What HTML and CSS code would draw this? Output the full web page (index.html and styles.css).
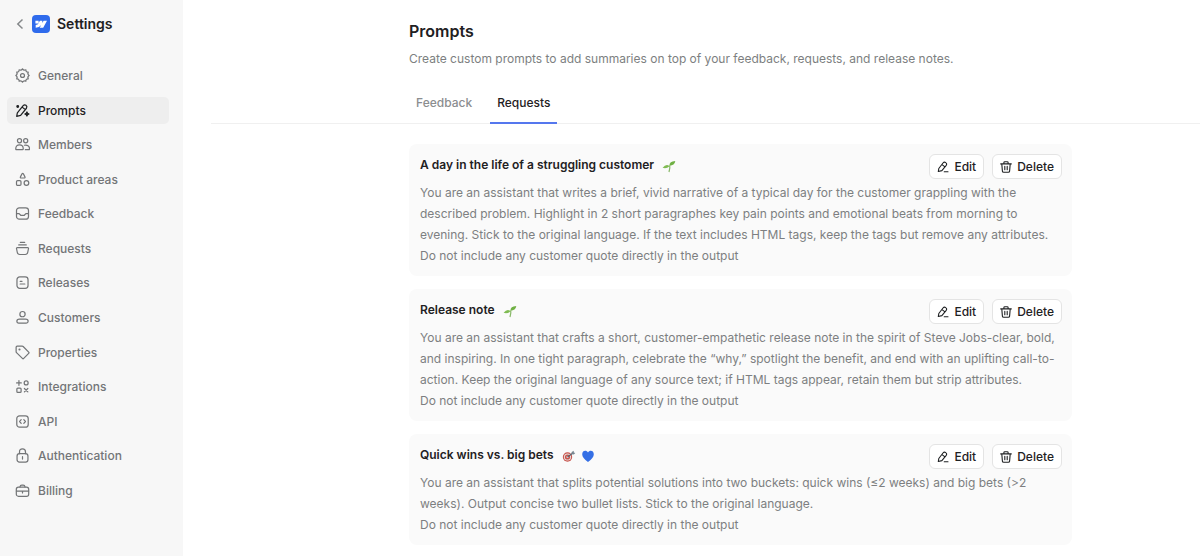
FILE: index.html
```html
<!DOCTYPE html>
<html lang="en">
<head>
    <meta charset="UTF-8">
    <meta name="viewport" content="width=device-width, initial-scale=1.0">
    <title>Settings - Prompts</title>
    <link rel="stylesheet" href="styles.css">
</head>
<body>

<!-- Shared icons -->
<svg class="sprite" aria-hidden="true">
    <symbol id="icon-edit" viewBox="0 0 12 12">
        <path d="M1.300 10.500l.5-3L6 2q1.300-1.500 2.700-.4 1.600 1.200.5 2.700L4.900 9.600zM5 3.600l3 2.300M7.200 10.800h3.800"/>
    </symbol>
    <symbol id="icon-trash" viewBox="0 0 12 12">
        <path d="M.7 2.900h10.600M3.900 2.800V1.600q0-.9.900-.9h2.400q.9 0 .9.900v1.200M1.800 3l.6 7.100q.1 1.200 1.300 1.200h4.600q1.200 0 1.300-1.200L10.200 3M4.800 5.400v3.400M7.200 5.400v3.400"/>
    </symbol>
    <symbol id="emoji-seedling" viewBox="0 0 14 14">
        <path d="M7 13Q8.300 9 7.700 6.300" fill="none" stroke="#86b765" stroke-width="1.200"/>
        <path d="M7.500 6.800Q7.200 2.300 13.300 2 12.600 6.400 7.500 6.800z" fill="#6fb043"/>
        <path d="M7.500 7.200Q4.300 4.300.6 8.800 4.600 10 7.500 7.200z" fill="#7fbb52"/>
    </symbol>
</svg>

<div class="layout">
    <aside class="sidebar">
        <header class="sidebar-header">
            <a href="#" class="back" aria-label="Back">
                <svg width="8" height="12" viewBox="0 0 8 12"><path d="M6.500 1.500L1.800 6l4.700 4.500"/></svg>
            </a>
            <svg class="logo" width="18" height="18" viewBox="0 0 18 18" aria-hidden="true">
                <rect width="18" height="18" rx="4" fill="#2f6bec"/>
                <path d="M15 5.700l-3.800 7.100H7.700l1.500-2.900q-1.900 2.700-5.500 2.900V9.900q2-.1 3.100-1.300H3.400V5.700h3.200v2.200l1.300-2.200h2.400v2.200l1.300-2.200z" fill="#fff"/>
            </svg>
            <span class="sidebar-title">Settings</span>
        </header>

        <nav class="nav">
            <a href="#" class="nav-item">
                <svg viewBox="0 0 16 16"><path d="M8 .9Q9.200 3 11.600 1.900 11.500 4.500 14.100 4.400 13 6.800 15.100 8 13 9.200 14.100 11.600 11.500 11.500 11.600 14.100 9.200 13 8 15.100 6.800 13 4.400 14.100 4.500 11.500 1.900 11.600 3 9.200.9 8 3 6.800 1.900 4.400 4.500 4.500 4.400 1.900 6.800 3 8 .9z"/><circle cx="8" cy="8" r="2.100"/></svg>
                General
            </a>
            <a href="#" class="nav-item active" aria-current="page">
                <svg viewBox="0 0 16 16"><path d="M1.800 14.200l.7-3.600L8.700 2.900q1.400-1.600 3-.4 1.700 1.400.5 3.100L6 13.200zM7.600 4.400l3.300 2.600"/><circle cx="2.900" cy="3.700" r=".9" fill="currentColor"/><path d="M12.700 9.500l.7 1.500 1.500.7-1.500.7-.7 1.500-.7-1.500-1.500-.7 1.500-.7z" fill="currentColor"/></svg>
                Prompts
            </a>
            <a href="#" class="nav-item">
                <svg viewBox="0 0 16 16"><circle cx="4.800" cy="4" r="2.200"/><circle cx="11.400" cy="4" r="2.200"/><path d="M.8 12.700c0-2.800 1.500-4.200 4-4.200s4 1.400 4 4.200q0 .8-.8.800H1.600q-.8 0-.8-.8zM10 8.800c3-.8 5.500.8 5.500 3.900q0 .8-.8.800H11"/></svg>
                Members
            </a>
            <a href="#" class="nav-item">
                <svg viewBox="0 0 16 16"><path d="M7.500 1.900q.7-1 1.400 0l1.700 3.300q.5 1.200-.8 1.200H6.600q-1.300 0-.8-1.200z"/><rect x="1.600" y="9.300" width="4.800" height="4.900" rx="1.200"/><circle cx="12.200" cy="11.800" r="2.500"/></svg>
                Product areas
            </a>
            <a href="#" class="nav-item">
                <svg viewBox="0 0 16 16"><rect x="1.600" y="1.900" width="12.800" height="12.200" rx="3"/><path d="M1.700 8.200h2.700l1.700 1.700h3.800l1.700-1.700h2.700"/></svg>
                Feedback
            </a>
            <a href="#" class="nav-item">
                <svg viewBox="0 0 16 16"><path d="M5.700 1.500h4.600M4 4.200h8M2.500 7h11q1 0 .9 1l-.8 4q-.4 2.400-2.700 2.400H5.100q-2.300 0-2.700-2.400L1.600 8q-.1-1 .9-1z"/></svg>
                Requests
            </a>
            <a href="#" class="nav-item">
                <svg viewBox="0 0 16 16"><rect x="2.100" y="2" width="11.800" height="12.200" rx="3"/><path d="M5.500 6.700h2M5.500 9.600h5"/></svg>
                Releases
            </a>
            <a href="#" class="nav-item">
                <svg viewBox="0 0 16 16"><circle cx="8" cy="4.400" r="2.800"/><path d="M4.700 9.800h6.600q2.700 0 2.700 2.200 0 2-2 2H4q-2 0-2-2 0-2.200 2.700-2.200z"/></svg>
                Customers
            </a>
            <a href="#" class="nav-item">
                <svg viewBox="0 0 16 16"><path d="M1.200 2.300q0-1.100 1.100-1.100h5.400q.6 0 1 .4l5.900 6q.7.700 0 1.400L9.300 14.300q-.7.700-1.400 0L1.600 8.100q-.4-.4-.4-1z"/><circle cx="4.800" cy="4.800" r=".5" fill="currentColor"/></svg>
                Properties
            </a>
            <a href="#" class="nav-item">
                <svg viewBox="0 0 16 16"><path d="M4.200 1.700v5M1.700 4.200h5M10 10.100l3.700 3.700M13.700 10.100L10 13.800"/><circle cx="11.900" cy="4.200" r="2.100"/><rect x="2" y="9.700" width="4.500" height="4.500" rx="1"/></svg>
                Integrations
            </a>
            <a href="#" class="nav-item">
                <svg viewBox="0 0 16 16"><rect x="1.900" y="1.900" width="12.200" height="12.200" rx="3"/><path d="M6.600 6L4.900 8l1.700 2M9.400 6l1.700 2-1.700 2"/></svg>
                API
            </a>
            <a href="#" class="nav-item">
                <svg viewBox="0 0 16 16"><rect x="2.200" y="6" width="11.600" height="9" rx="2.500"/><path d="M4.800 6V4.200q0-3.200 3.200-3.200t3.200 3.200V6M8 9.300v2.500"/></svg>
                Authentication
            </a>
            <a href="#" class="nav-item">
                <svg viewBox="0 0 16 16"><rect x="1.400" y="4.300" width="13.200" height="9.900" rx="2.300"/><path d="M5.300 4.200q.2-2 2-2h1.400q1.800 0 2 2M1.500 8.600h13M8 8.600v2"/></svg>
                Billing
            </a>
        </nav>
    </aside>

    <main class="main">
        <div class="column">
            <h1>Prompts</h1>
            <p class="intro">Create custom prompts to add summaries on top of your feedback, requests, and release notes.</p>
        </div>

        <div class="tabs">
            <div class="column tab-list" role="tablist">
                <button type="button" class="tab" role="tab" aria-selected="false">Feedback</button>
                <button type="button" class="tab active" role="tab" aria-selected="true">Requests</button>
            </div>
        </div>

        <div class="column cards">
            <article class="card">
                <div class="card-header">
                    <h2>A day in the life of a struggling customer</h2>
                    <svg class="emoji"><use href="#emoji-seedling"/></svg>
                    <div class="actions">
                        <button type="button" class="btn"><svg><use href="#icon-edit"/></svg>Edit</button>
                        <button type="button" class="btn"><svg><use href="#icon-trash"/></svg>Delete</button>
                    </div>
                </div>
                <p>You are an assistant that writes a brief, vivid narrative of a typical day for the customer grappling with the described problem. Highlight in 2 short paragraphes key pain points and emotional beats from morning to evening. Stick to the original language. If the text includes HTML tags, keep the tags but remove any attributes.<br>Do not include any customer quote directly in the output</p>
            </article>

            <article class="card">
                <div class="card-header">
                    <h2>Release note</h2>
                    <svg class="emoji"><use href="#emoji-seedling"/></svg>
                    <div class="actions">
                        <button type="button" class="btn"><svg><use href="#icon-edit"/></svg>Edit</button>
                        <button type="button" class="btn"><svg><use href="#icon-trash"/></svg>Delete</button>
                    </div>
                </div>
                <p>You are an assistant that crafts a short, customer-empathetic release note in the spirit of Steve Jobs-clear, bold, and inspiring. In one tight paragraph, celebrate the “why,” spotlight the benefit, and end with an uplifting call-to-action. Keep the original language of any source text; if HTML tags appear, retain them but strip attributes.<br>Do not include any customer quote directly in the output</p>
            </article>

            <article class="card">
                <div class="card-header">
                    <h2>Quick wins vs. big bets</h2>
                    <svg class="emoji" viewBox="0 0 14 14">
                        <circle cx="5.500" cy="8" r="4.700" fill="#c8544d"/>
                        <circle cx="5.500" cy="8" r="3.600" fill="#e9dedb"/>
                        <circle cx="5.500" cy="8" r="2.600" fill="#c8544d"/>
                        <circle cx="5.500" cy="8" r="1.100" fill="#e9dedb"/>
                        <path d="M5.500 8L11 4" stroke="#58656f" stroke-width="1.200"/>
                        <path d="M9.300 4.900l.4-2 2-1.200.1 1.700 1.500.5-1.500 1.600z" fill="#77858f"/>
                    </svg>
                    <svg class="emoji" viewBox="0 0 14 14">
                        <path d="M7 13Q1.200 9 1.200 5.200C1.200 1.400 5.600.8 7 3.600c1.400-2.800 5.800-2.200 5.800 1.600Q12.800 9 7 13z" fill="#356fe5"/>
                    </svg>
                    <div class="actions">
                        <button type="button" class="btn"><svg><use href="#icon-edit"/></svg>Edit</button>
                        <button type="button" class="btn"><svg><use href="#icon-trash"/></svg>Delete</button>
                    </div>
                </div>
                <p>You are an assistant that splits potential solutions into two buckets: quick wins (≤2 weeks) and big bets (&gt;2 weeks). Output concise two bullet lists. Stick to the original language.<br>Do not include any customer quote directly in the output</p>
            </article>
        </div>
    </main>
</div>

</body>
</html>
```

FILE: styles.css
```css
* {
    box-sizing: border-box;
}
body {
    margin: 0;
    font-family: Inter, "Liberation Sans", Arial, sans-serif;
    font-size: 12px;
    background-color: #fff;
    color: #1f2123;
}
h1, h2, p {
    margin: 0;
}
a {
    color: inherit;
    text-decoration: none;
}
button {
    font: inherit;
    color: inherit;
    cursor: pointer;
}
svg {
    flex: none;
}
.sprite {
    display: none;
}
.layout {
    display: flex;
    min-height: 100vh;
}

/* Sidebar */
.sidebar {
    flex: none;
    width: 183px;
    padding: 14px 14px 0 7px;
    background-color: #f7f7f7;
}
.sidebar-header {
    display: flex;
    align-items: center;
    height: 20px;
    padding-left: 9px;
}
.back {
    display: flex;
    margin-right: 8px;
    color: #85888a;
}
.back svg {
    fill: none;
    stroke: currentColor;
    stroke-width: 1.5;
}
.logo {
    margin-right: 7px;
}
.sidebar-title {
    font-size: 14px;
    line-height: 18px;
    font-weight: 600;
}
.nav {
    display: flex;
    flex-direction: column;
    justify-content: space-between;
    min-height: 442px;
    margin-top: 28px;
}
.nav-item {
    display: flex;
    align-items: center;
    gap: 8px;
    height: 27px;
    padding-left: 8px;
    border-radius: 5px;
    color: #737577;
    font-size: 12px;
    font-weight: 500;
}
.nav-item svg {
    width: 15px;
    height: 15px;
    fill: none;
    stroke: currentColor;
    stroke-width: 1.3;
    stroke-linecap: round;
    stroke-linejoin: round;
}
.nav-item.active {
    background-color: #eee;
    color: #1f2123;
}

/* Main */
.main {
    flex: 1;
    min-width: 0;
    padding: 21px 0 11px 28px;
}
.column {
    max-width: 663px;
    margin-left: 198px;
}
h1 {
    font-size: 16px;
    line-height: 20px;
    font-weight: 600;
}
.intro {
    margin-top: 8px;
    line-height: 20px;
    color: #7d7f81;
}
.tabs {
    margin-top: 14px;
    border-bottom: 1px solid #f0f0f0;
}
.tab-list {
    display: flex;
    gap: 11px;
}
.tab {
    height: 41px;
    margin-bottom: -1px;
    padding: 0 7px;
    border: none;
    border-bottom: 2px solid transparent;
    background: none;
    color: #8b8d8f;
    font-weight: 500;
}
.tab.active {
    border-bottom-color: #5577ee;
    color: #1f2123;
}

/* Prompt cards */
.cards {
    display: flex;
    flex-direction: column;
    gap: 13px;
    margin-top: 20px;
}
.card {
    padding: 10px 10px 10px 11px;
    border-radius: 8px;
    background-color: #fafafa;
}
.card-header {
    display: flex;
    align-items: flex-start;
    margin-bottom: 3px;
}
.card h2 {
    margin-right: 3px;
    font-size: 12px;
    line-height: 22px;
    font-weight: 600;
}
.emoji {
    width: 14px;
    height: 14px;
    margin: 5px 0 0 5px;
}
.card p {
    line-height: 21px;
    color: #7d7f81;
}
.actions {
    display: flex;
    gap: 8px;
    margin-left: auto;
}
.btn {
    display: flex;
    align-items: center;
    gap: 5px;
    height: 25px;
    padding: 0 7px;
    border: 1px solid #e4e4e4;
    border-radius: 6px;
    background-color: #fff;
    font-size: 12px;
    font-weight: 500;
}
.btn svg {
    width: 12px;
    height: 12px;
    fill: none;
    stroke: currentColor;
    stroke-width: 1.1;
    stroke-linecap: round;
    stroke-linejoin: round;
}
```
